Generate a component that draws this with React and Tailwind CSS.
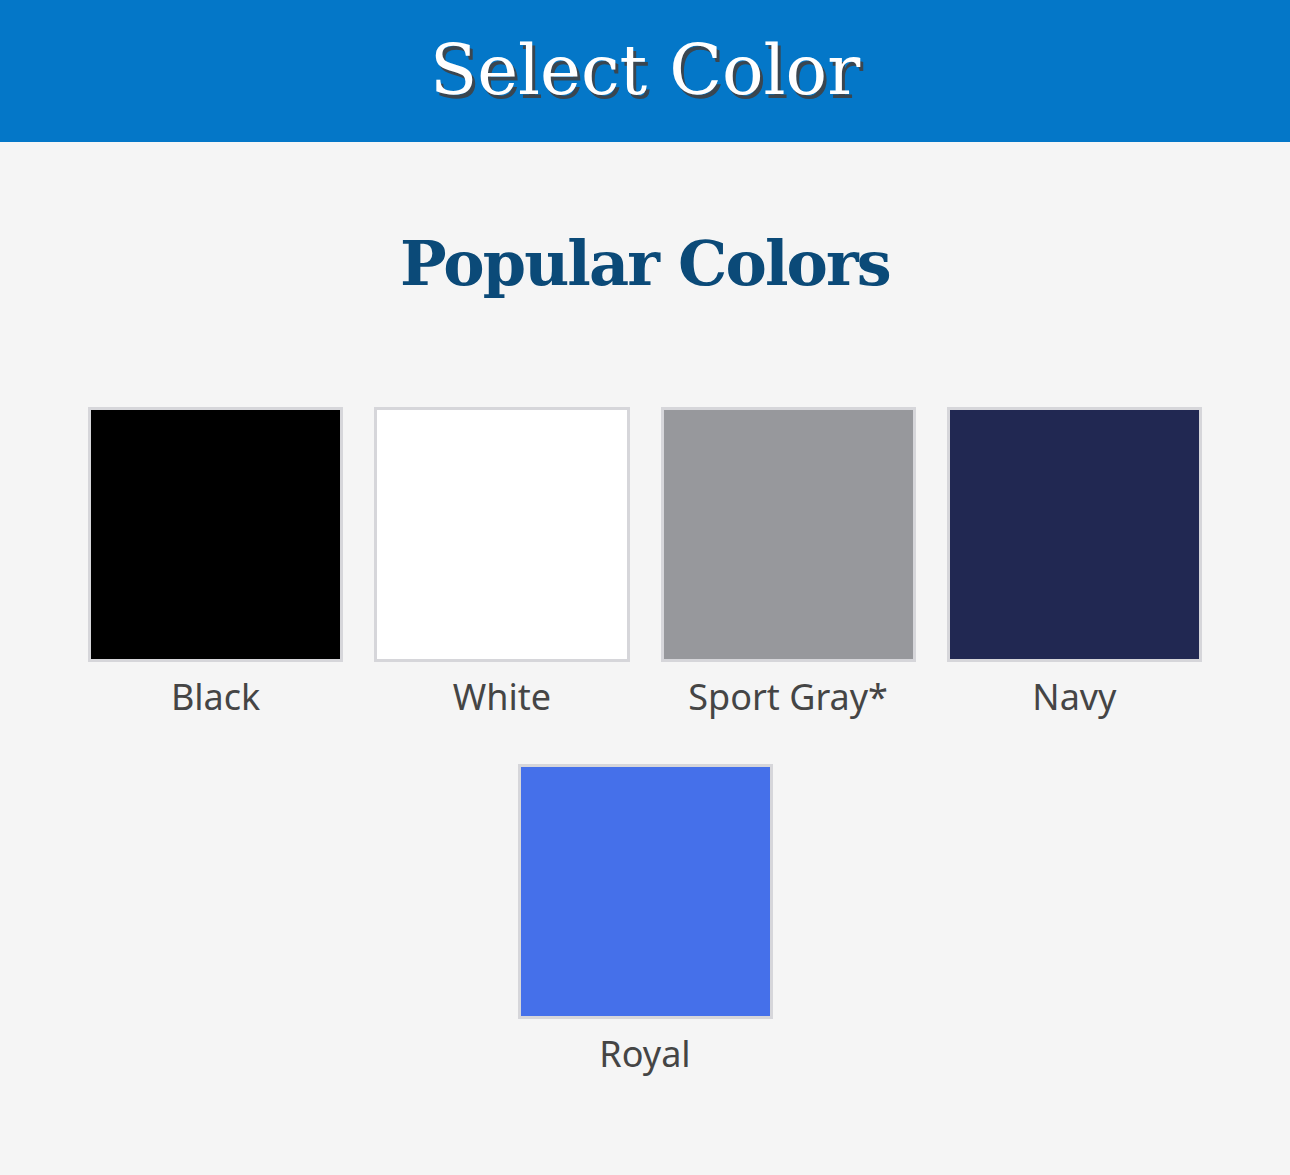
const colors = [
  { name: 'Black', hex: 'bg-[#000000]' },
  { name: 'White', hex: 'bg-[#ffffff]' },
  { name: 'Sport Gray*', hex: 'bg-[#97989c]' },
  { name: 'Navy', hex: 'bg-[#212852]' },
];

function Swatch({ name, hex }) {
  return (
    <div className="flex flex-col items-center">
      <div className={`w-full aspect-square border-[3px] border-[#d6d6da] ${hex}`} />
      <span className="mt-[12px] text-[36px] leading-[46px] text-[#454545] font-['Noto_Sans',sans-serif]">
        {name}
      </span>
    </div>
  );
}

export default function App() {
  return (
    <div className="min-h-[1175px] bg-[#f5f5f5]">
      <header className="h-[142px] bg-[#0477c8] flex items-center justify-center">
        <h1 className="text-[69px] text-white font-['DejaVu_Serif',serif] [text-shadow:3px_4px_0_#3a4650]">
          Select Color
        </h1>
      </header>

      <h2 className="mt-[82px] text-center text-[62px] tracking-[-0.03em] font-bold text-[#0b4a78] font-['DejaVu_Serif',serif] leading-[80px]">
        Popular Colors
      </h2>

      <div className="mt-[103px] px-[88px] grid grid-cols-4 gap-x-[31px] gap-y-[44px]">
        {colors.map((c) => (
          <Swatch key={c.name} {...c} />
        ))}
        <div className="col-span-4 flex justify-center">
          <div className="w-[255px]">
            <Swatch name="Royal" hex="bg-[#4570ea]" />
          </div>
        </div>
      </div>
    </div>
  );
}
